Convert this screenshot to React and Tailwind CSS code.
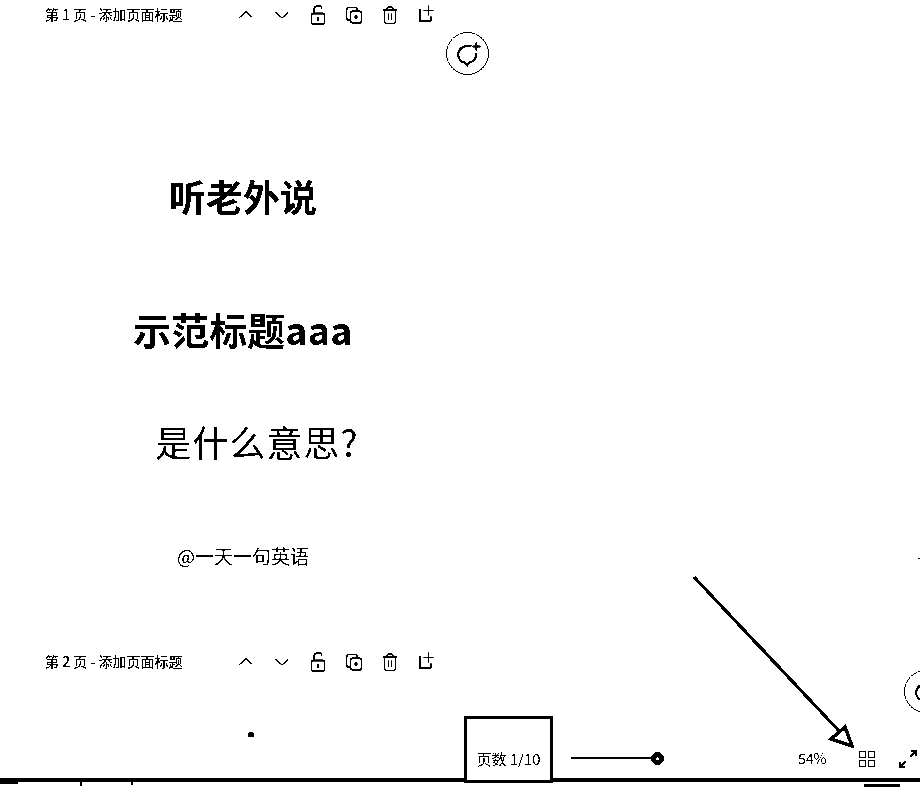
import React from 'react';

const Svg = ({ size = 20, children, className = '' }) => (
  <svg width={size} height={size} viewBox="0 0 20 20" fill="none" stroke="black" strokeWidth="1.5" className={className}>
    {children}
  </svg>
);

const icons = [
  <path key="up" d="M3.5 12.5 L10 6.5 L16.5 12.5" strokeWidth="1.3" />,
  <path key="down" d="M3.5 7.5 L10 13 L16.5 7.5" strokeWidth="1.3" />,
  <g key="lock">
    <rect x="3.5" y="8.5" width="13" height="10.5" rx="1.5" strokeWidth="1.8" />
    <path d="M6 8.5 V4.5 C6 0 13 -0.5 14 3.5" />
    <path d="M10 11.5 V16" strokeWidth="1.8" />
  </g>,
  <g key="copy">
    <rect x="6.5" y="6" width="11" height="12" rx="2.5" strokeWidth="1.7" />
    <path d="M6 15 H5 C3.5 15 2.5 14 2.5 12.5 V5 C2.5 3.5 3.5 2.5 5 2.5 H11 C12.5 2.5 13.5 3.5 13.5 5" strokeWidth="1.7" />
    <path d="M12 9.5 V14.5 M9.5 12 H14.5" strokeWidth="1.2" />
  </g>,
  <g key="trash">
    <path d="M2.5 5 H17.5" />
    <path d="M7 5 V3.5 C7 2.5 7.5 2 8.5 2 H11.5 C12.5 2 13 2.5 13 3.5 V5" strokeWidth="1.3" />
    <path d="M4.5 5 V16 C4.5 17.5 5.5 18.5 7 18.5 H13 C14.5 18.5 15.5 17.5 15.5 16 V5" />
    <path d="M8.5 8.5 V15 M11.5 8.5 V15" strokeWidth="1.2" />
  </g>,
  <g key="add">
    <path d="M4 4 V16 H12.5 C14 16 15 15 15 13.5 V11.5" strokeWidth="2" />
    <path d="M7.5 5.5 H17.5 M12.5 0.5 V10.5" strokeWidth="1.6" />
  </g>,
];

const PageHeader = ({ number }) => (
  <div className="flex h-[30px] items-center pl-[45px]">
    <span className="mb-[2px] w-[183px] text-[14px] font-medium whitespace-nowrap text-black">
      第 {number} 页 - 添加页面标题
    </span>
    <div className="flex">
      {icons.map((icon, index) => (
        <div key={index} className="flex w-9 items-center justify-center">
          <Svg>{icon}</Svg>
        </div>
      ))}
    </div>
  </div>
);

const CommentButton = () => (
  <div className="flex h-[43px] w-[43px] items-center justify-center rounded-full border border-black bg-white">
    <Svg size={28}>
      <path d="M12.5 4.6 C8 3.2 3 6 3 10.5 C3 13.8 5.3 15.8 7.8 16.1 L9.4 18 L11 16 C14 15.4 16 13 16 9.2" strokeWidth="1.6" />
      <path d="M16 1.6 V7.6 M13 4.6 H19" strokeWidth="1.4" />
    </Svg>
  </div>
);

const App = () => (
  <div className="relative flex h-[787px] w-[920px] flex-col overflow-hidden bg-white text-black contrast-[100] font-['Noto_Sans_CJK_SC',sans-serif]">
    <main className="flex-1 overflow-hidden">
      <PageHeader number={1} />
      <div className="relative h-[617px] w-[486px] text-center">
        <div className="absolute top-[2px] right-[-3px]">
          <CommentButton />
        </div>
        <h1 className="pt-[140px] text-[37px] leading-[52px] font-bold">听老外说</h1>
        <h1 className="mt-[81px] text-[38px] leading-[52px] font-bold">示范标题aaa</h1>
        <p className="mt-[60px] pl-[28px] text-[36px] leading-[52px] tracking-[1px]">是什么意思?</p>
        <p className="mt-[76px] text-[19px] leading-[26px]">@一天一句英语</p>
      </div>
      <PageHeader number={2} />
      <div className="mt-[55px] ml-[248px] h-[5px] w-[6px] rounded-t-full bg-black" />
    </main>

    <div className="absolute top-[670px] left-[904px]">
      <CommentButton />
    </div>
    <div className="absolute top-[558px] left-[918px] h-px w-[2px] bg-black" />

    <div className="absolute right-0 bottom-[7px] left-0 z-10 flex h-[64px] items-start">
      <div className="ml-[464px] flex h-[67px] w-[89px] items-end justify-center border-[3px] border-black bg-white pb-[11px] text-[15px] leading-5">
        页数 1/10
      </div>
      <div className="mt-[41px] ml-[18px] h-[2px] w-[80px] bg-black" />
      <div className="mt-[36px] h-[13px] w-[13px] rounded-full border-[5px] border-black bg-white" />
      <span className="mt-[32px] ml-[134px] text-[14px] leading-5">54%</span>
      <div className="mt-[34px] ml-[32px]">
        <svg width="18" height="18" viewBox="0 0 18 18" fill="none" stroke="black" strokeWidth="1.5">
          <rect x="1.5" y="1.5" width="6" height="6" rx="1" />
          <rect x="10.5" y="1.5" width="6" height="6" rx="1" />
          <rect x="1.5" y="10.5" width="6" height="6" rx="1" />
          <rect x="10.5" y="10.5" width="6" height="6" rx="1" />
        </svg>
      </div>
      <div className="mt-[33px] ml-[22px]">
        <svg width="20" height="20" viewBox="0 0 20 20" fill="none" stroke="black" strokeWidth="1.8">
          <path d="M12 8 L18 2 M13 2 H18 V7" />
          <path d="M8 12 L2 18 M2 13 V18 H7" />
        </svg>
      </div>
    </div>

    {/* annotation arrow drawn on top of the screenshot */}
    <svg className="absolute top-[570px] left-[685px] z-10" width="180" height="185" viewBox="0 0 180 185" fill="none" stroke="black">
      <path d="M9 7 L155 162" strokeWidth="3.2" />
      <path d="M146 169 L160 157 L167 176 Z" fill="white" strokeWidth="3.5" />
    </svg>

    <footer className="relative h-[9px] border-t-[4px] border-black bg-white">
      <div className="absolute top-0 left-0 h-[2px] w-[18px] bg-black" />
      <div className="absolute top-0 left-[80px] h-[4px] w-[2px] bg-black" />
      <div className="absolute top-0 left-[131px] h-[3px] w-[2px] bg-black" />
      <div className="absolute top-[2px] left-[864px] h-[3px] w-[36px] bg-black" />
    </footer>
  </div>
);

export default App;
